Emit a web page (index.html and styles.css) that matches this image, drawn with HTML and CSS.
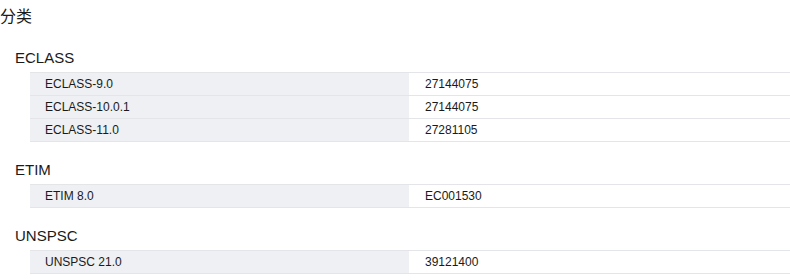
FILE: index.html
```html
<!DOCTYPE html>
<html lang="zh">
<head>
<meta charset="utf-8">
<link rel="stylesheet" href="styles.css">
</head>
<body>
<div class="page">
  <h2 class="title">分类</h2>

  <section class="group">
    <h3 class="group-name">ECLASS</h3>
    <div class="table">
      <div class="row"><div class="cell label">ECLASS-9.0</div><div class="cell value">27144075</div></div>
      <div class="row"><div class="cell label">ECLASS-10.0.1</div><div class="cell value">27144075</div></div>
      <div class="row"><div class="cell label">ECLASS-11.0</div><div class="cell value">27281105</div></div>
    </div>
  </section>

  <section class="group">
    <h3 class="group-name">ETIM</h3>
    <div class="table">
      <div class="row"><div class="cell label">ETIM 8.0</div><div class="cell value">EC001530</div></div>
    </div>
  </section>

  <section class="group">
    <h3 class="group-name">UNSPSC</h3>
    <div class="table">
      <div class="row"><div class="cell label">UNSPSC 21.0</div><div class="cell value">39121400</div></div>
    </div>
  </section>
</div>
</body>
</html>
```
FILE: styles.css
```css
html, body {
  margin: 0;
  padding: 0;
  background: #ffffff;
}

body {
  font-family: "Liberation Sans", Arial, "Noto Sans CJK SC", sans-serif;
  color: #1a1a1a;
}

.page {
  width: 790px;
}

.title {
  margin: 0;
  padding-top: 5px;
  font-size: 16px;
  line-height: 24px;
  font-weight: normal;
  font-family: "Liberation Sans", "Noto Sans CJK SC", sans-serif;
}

.group-name {
  margin: 19px 0 6px 15px;
  font-size: 15px;
  line-height: 17px;
  font-weight: normal;
}

.group:first-of-type .group-name {
  margin-top: 20px;
}

.table {
  margin-left: 30px;
  border-top: 1px solid #e3e5e8;
}

.row {
  display: grid;
  grid-template-columns: 379px 1fr;
  border-bottom: 1px solid #e3e5e8;
}

.cell {
  height: 22px;
  line-height: 22px;
  font-size: 12px;
  padding-left: 16px;
}

.label {
  background: #eef0f3;
  padding-left: 15px;
}
```
